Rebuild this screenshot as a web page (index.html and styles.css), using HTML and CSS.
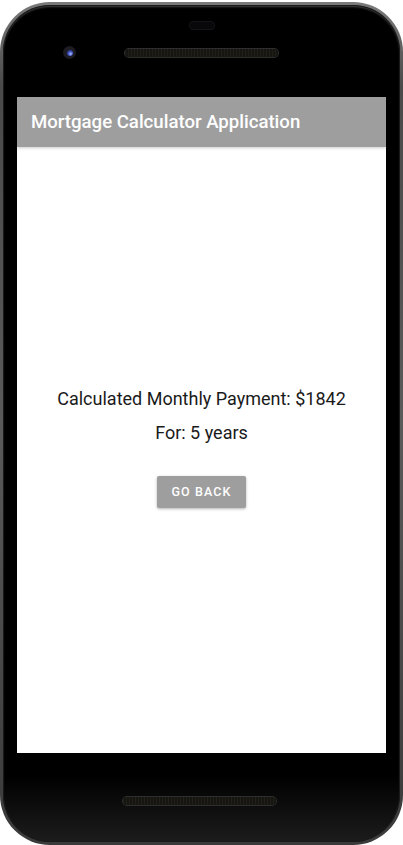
FILE: index.html
```html
<!DOCTYPE html>
<html>
<head>
<meta charset="utf-8">
<link rel="stylesheet" href="styles.css">
</head>
<body>
<div class="phone">
  <div class="inner">
    <div class="top-bezel">
      <div class="sensor"></div>
      <div class="top-row">
        <div class="camera"><div class="lens"></div></div>
        <div class="speaker"></div>
      </div>
    </div>
    <div class="screen">
      <div class="appbar">Mortgage Calculator Application</div>
      <div class="content">
        <div class="line1">Calculated Monthly Payment: $1842</div>
        <div class="line2">For: 5 years</div>
        <button class="btn">GO BACK</button>
      </div>
    </div>
    <div class="bottom-bezel">
      <div class="speaker bottom"></div>
    </div>
  </div>
</div>
</body>
</html>
```
FILE: styles.css
```css
html, body {
  margin: 0;
  padding: 0;
  background: #ffffff;
}
body {
  width: 403px;
  height: 845px;
  overflow: hidden;
  font-family: Roboto, "Liberation Sans", sans-serif;
}
.phone {
  box-sizing: border-box;
  margin-top: 2px;
  width: 403px;
  height: 843px;
  border-radius: 50px;
  padding: 3px;
  background: linear-gradient(to bottom, #7a7a7a, #4a4a4a 10%, #5a5a5a 50%, #3a3a3a 100%);
}
.inner {
  box-sizing: border-box;
  height: 100%;
  border-radius: 47px;
  background: linear-gradient(to bottom, #000 0%, #000 92%, #1c1c1c 100%);
  box-shadow: inset 0 0 0 1px #1a1a1a, inset 0 2px 2px rgba(255,255,255,0.25);
  padding: 0 14px;
  display: flex;
  flex-direction: column;
}
.top-bezel {
  height: 92px;
  display: flex;
  flex-direction: column;
  align-items: center;
}
.sensor {
  margin-top: 16px;
  width: 26px;
  height: 9px;
  border-radius: 5px;
  background: #08080a;
  box-shadow: inset 0 0 0 1px #141418;
}
.top-row {
  align-self: stretch;
  margin-top: 16px;
  padding-left: 46px;
  display: flex;
  align-items: center;
}
.camera {
  width: 13px;
  height: 13px;
  border-radius: 50%;
  background: #1c1c22;
  display: flex;
  align-items: center;
  justify-content: center;
}
.lens {
  width: 6px;
  height: 6px;
  border-radius: 50%;
  background: radial-gradient(circle at 60% 65%, #b8c4ff 0%, #4458c8 40%, #141a3a 100%);
}
.speaker {
  margin-left: 49px;
  width: 153px;
  height: 8px;
  border-radius: 5px;
  background: repeating-linear-gradient(to right, #222016 0, #222016 1px, #151511 1px, #151511 3px);
  box-shadow: 0 0 0 1px #2e2e2e;
}
.screen {
  height: 656px;
  background: #ffffff;
  display: flex;
  flex-direction: column;
}
.appbar {
  height: 50px;
  flex-shrink: 0;
  box-sizing: border-box;
  background: #9e9e9e;
  color: #ffffff;
  font-size: 18.6px;
  font-weight: 500;
  line-height: 50px;
  padding-left: 14px;
  box-shadow: 0 1px 3px rgba(0,0,0,0.2);
  position: relative;
  z-index: 1;
}
.content {
  flex: 1;
  display: flex;
  flex-direction: column;
  align-items: center;
  justify-content: center;
  padding-bottom: 6px;
}
.line1, .line2 {
  font-size: 18px;
  color: #1a1a1a;
  line-height: 24px;
}
.line2 {
  margin-top: 10px;
}
.btn {
  margin-top: 31px;
  width: 89px;
  height: 32px;
  border: none;
  border-radius: 2px;
  background: #9e9e9e;
  color: #ffffff;
  font-family: Roboto, "Liberation Sans", sans-serif;
  font-size: 12.5px;
  font-weight: 500;
  letter-spacing: 1.1px;
  box-shadow: 0 1px 3px rgba(0,0,0,0.3);
  padding: 0;
}
.bottom-bezel {
  flex: 1;
  display: flex;
  justify-content: center;
}
.speaker.bottom {
  margin-left: 0;
  margin-right: 4px;
  margin-top: 44px;
}
```
